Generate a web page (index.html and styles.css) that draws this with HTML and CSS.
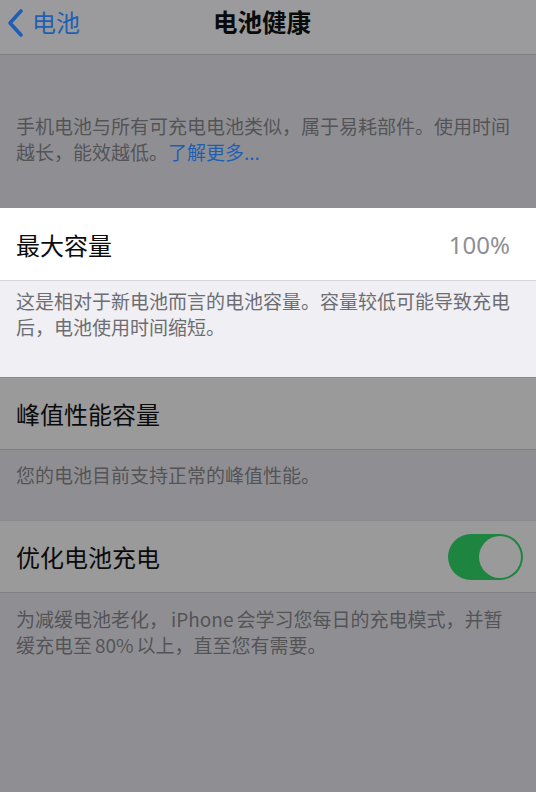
FILE: index.html
```html
<!DOCTYPE html>
<html lang="zh-CN">
<head>
<meta charset="utf-8">
<title>电池健康</title>
<link rel="stylesheet" href="styles.css">
</head>
<body>
<div class="page">
  <header class="nav">
    <div class="back">
      <svg class="chev" width="20" height="30" viewBox="0 0 20 30"><path d="M15 3 L4 15 L15 27" fill="none" stroke="#1f5fb3" stroke-width="3.6" stroke-linecap="round" stroke-linejoin="round"/></svg>
      <span class="back-text">电池</span>
    </div>
    <div class="title">电池健康</div>
  </header>

  <div class="intro dim-bg">
    <p class="foot dim-text">手机电池与所有可充电电池类似，属于易耗部件。使用时间越长，能效越低。<span class="link">了解更多...</span></p>
  </div>

  <div class="cell lit-cell">
    <span class="label">最大容量</span>
    <span class="value">100%</span>
  </div>
  <div class="footer lit-foot">
    <p class="foot">这是相对于新电池而言的电池容量。容量较低可能导致充电后，电池使用时间缩短。</p>
  </div>

  <div class="cell dim-cell">
    <span class="label">峰值性能容量</span>
  </div>
  <div class="footer footer-short dim-bg">
    <p class="foot dim-text">您的电池目前支持正常的峰值性能。</p>
  </div>

  <div class="cell dim-cell">
    <span class="label">优化电池充电</span>
    <span class="switch"><span class="knob"></span></span>
  </div>
  <div class="footer footer-last dim-bg">
    <p class="foot dim-text">为减缓电池老化，<span class="lat">iPhone</span>会学习您每日的充电模式，并暂缓充电至<span class="lat">80%</span>以上，直至您有需要。</p>
  </div>
</div>
</body>
</html>
```

FILE: styles.css
```css
html, body {
  margin: 0;
  padding: 0;
}
body {
  width: 536px;
  height: 792px;
  overflow: hidden;
  background: #8f8f93;
  font-family: "Noto Sans CJK SC", "Noto Sans", sans-serif;
}
.page {
  display: flex;
  flex-direction: column;
  min-height: 792px;
  background: #8f8f93;
}
.nav {
  height: 55px;
  box-sizing: border-box;
  border-bottom: 1px solid #7c7c7f;
  background: #9b9b9d;
  display: grid;
  grid-template-columns: 1fr auto 1fr;
  align-items: start;
}
.back {
  grid-column: 1;
  grid-row: 1;
  display: flex;
  align-items: center;
  padding-left: 6px;
  height: 44px;
}
.chev {
  display: block;
  margin-top: 1px;
}
.back-text {
  color: #1f5fb3;
  font-size: 24px;
  line-height: 44px;
  margin-left: 6px;
}
.title {
  grid-column: 2;
  grid-row: 1;
  font-size: 24.5px;
  font-weight: 600;
  color: #0b0b0b;
  line-height: 44px;
  margin-right: 12px;
}
.dim-bg {
  background: #8f8f93;
}
.intro {
  height: 153px;
  box-sizing: border-box;
  padding: 58px 16px 0;
}
.foot {
  margin: 0;
  font-size: 19px;
  line-height: 26px;
  color: #6d6d72;
}
.dim-text {
  color: #545457;
}
.link {
  color: #1f5fb3;
}
.lat {
  margin: 0 3px;
}
.cell {
  height: 73px;
  box-sizing: border-box;
  display: flex;
  align-items: center;
  justify-content: space-between;
  padding: 0 14px 0 16px;
  border-bottom: 1px solid #7f7f82;
}
.label {
  font-size: 24px;
  color: #0b0b0b;
}
.lit-cell {
  background: #ffffff;
  border-bottom-color: #d6d6da;
  padding-right: 26px;
}
.value {
  font-family: "Noto Sans", sans-serif;
  font-size: 24px;
  color: #8e8e93;
}
.dim-cell {
  background: #9a9a9a;
  border-top: 1px solid #8a8a8c;
}
.footer {
  height: 96px;
  box-sizing: border-box;
  padding: 7px 16px 0;
}
.lit-foot {
  background: #efeff4;
}
.footer-short {
  height: 70px;
  padding-top: 12px;
}
.footer-last {
  flex: 1;
  height: auto;
  padding-top: 13px;
}
.switch {
  width: 75px;
  height: 46px;
  box-sizing: border-box;
  border-radius: 23px;
  background: #1e8540;
  display: flex;
  align-items: center;
  justify-content: flex-end;
  padding: 2px;
  margin-right: -1px;
}
.knob {
  width: 42px;
  height: 42px;
  border-radius: 50%;
  background: #9a9a9a;
}
```
